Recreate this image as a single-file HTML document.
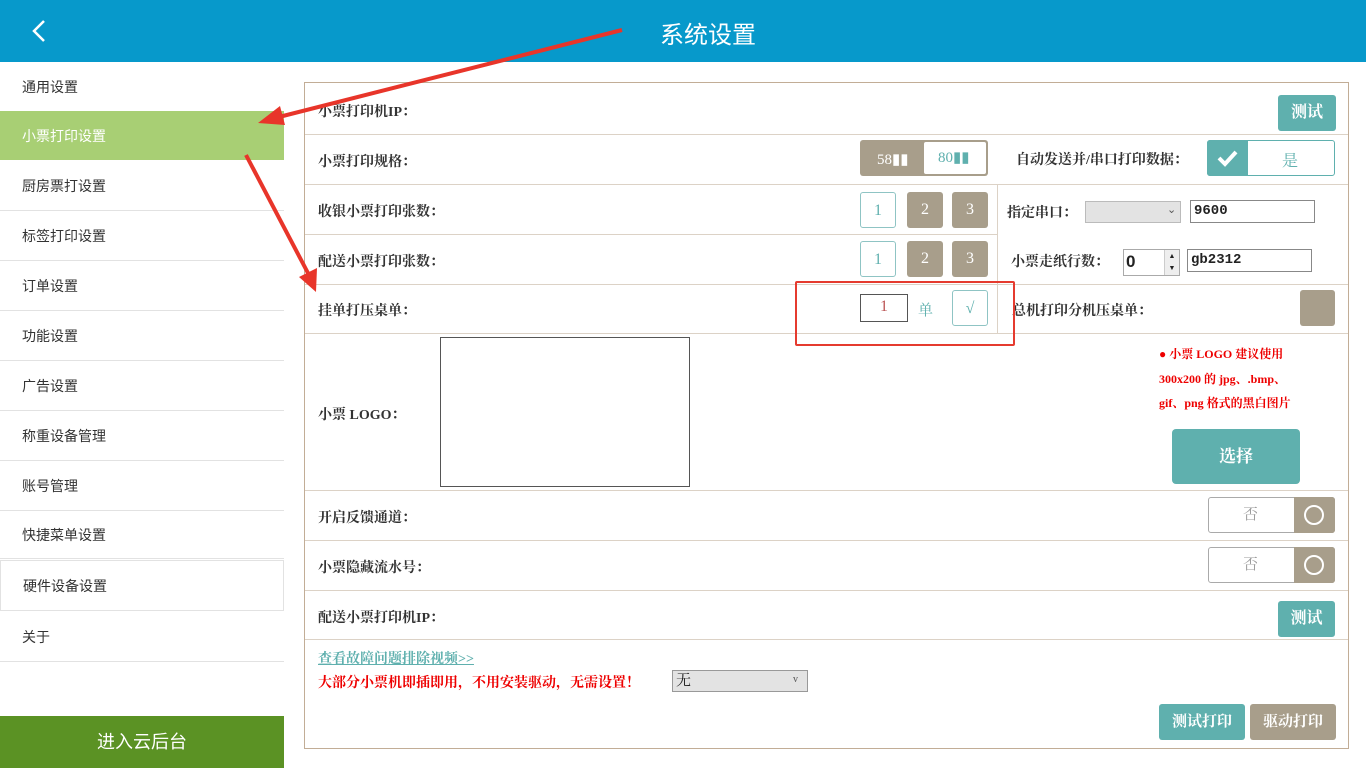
<!DOCTYPE html>
<html><head><meta charset="utf-8"><style>
*{margin:0;padding:0;box-sizing:border-box}
body{width:1366px;height:768px;position:relative;overflow:hidden;background:#fff;font-family:"Liberation Serif","Noto Serif CJK SC","Noto Sans CJK SC",serif;color:#222}
.a{position:absolute}
.hdr{left:0;top:0;width:1366px;height:62px;background:#0799cb}
.title{left:0;top:15px;width:1416px;text-align:center;color:#fff;font:24px "Liberation Sans","Noto Sans CJK SC",sans-serif}
.side{font:14px "Liberation Sans","Noto Sans CJK SC",sans-serif;color:#333}
.si{position:absolute;left:0;width:284px;height:50px;line-height:50px;padding-left:22px;border-bottom:1px solid #e2e2e2}
.panel{left:304px;top:82px;width:1045px;height:667px;border:1px solid #c2ad96}
.ln{position:absolute;left:305px;width:1043px;height:1px;background:#dcd2c6}
.lb{position:absolute;font-size:14px;font-weight:bold;color:#333}
.btn{position:absolute;border-radius:3px;color:#fff;text-align:center;font-weight:bold}
.teal{background:#5fb0ae}.tau{background:#a89e8b}
.nb{position:absolute;width:36px;height:36px;border-radius:3px;text-align:center;line-height:36px;font-size:16px}
.inp{position:absolute;border:1px solid #888;background:#fff;font:bold 14px "Liberation Mono",monospace;padding-left:3px}
</style></head><body>
<div class="a hdr"></div>
<div class="a title">系统设置</div>
<svg class="a" style="left:28px;top:18px" width="20" height="26"><path d="M16 3 L6 13 L16 23" stroke="#fff" stroke-width="2.5" fill="none"/></svg>

<div class="side">
<div class="si" style="top:62px">通用设置</div>
<div class="si" style="top:111px;background:#a8cf74;color:#fff;border:none;height:49px">小票打印设置</div>
<div class="si" style="top:161px">厨房票打设置</div>
<div class="si" style="top:211px">标签打印设置</div>
<div class="si" style="top:261px">订单设置</div>
<div class="si" style="top:311px">功能设置</div>
<div class="si" style="top:361px">广告设置</div>
<div class="si" style="top:411px">称重设备管理</div>
<div class="si" style="top:461px">账号管理</div>
<div class="si" style="top:510px;height:49px">快捷菜单设置</div>
<div class="si" style="top:560px;height:51px;border:1px solid #e2e2e2">硬件设备设置</div>
<div class="si" style="top:612px">关于</div>
</div>
<div class="a" style="left:0;top:716px;width:284px;height:52px;background:#5b9224;color:#fff;text-align:center;font-family:'Liberation Sans','Noto Sans CJK SC',sans-serif;font-size:18px;line-height:52px">进入云后台</div>

<div class="a panel"></div>
<div class="ln" style="top:134px"></div>
<div class="ln" style="top:184px"></div>
<div class="ln" style="top:234px;width:692px"></div>
<div class="ln" style="top:284px"></div>
<div class="ln" style="top:333px"></div>
<div class="ln" style="top:490px"></div>
<div class="ln" style="top:540px"></div>
<div class="ln" style="top:590px"></div>
<div class="ln" style="top:639px"></div>
<div class="a" style="left:997px;top:184px;width:1px;height:149px;background:#dcd2c6"></div>

<div class="lb" style="left:318px;top:101px">小票打印机IP：</div>
<div class="btn teal" style="left:1278px;top:95px;width:58px;height:36px;line-height:36px;font-size:16px">测试</div>

<div class="lb" style="left:318px;top:151px">小票打印规格：</div>
<div class="a tau" style="left:860px;top:140px;width:128px;height:36px;border-radius:3px"></div>
<div class="a" style="left:877px;top:150px;color:#fff;font-size:15px">58▮▮</div>
<div class="a" style="left:924px;top:142px;width:62px;height:32px;background:#fff;border-radius:2px;color:#5fb0ae;font-size:15px;line-height:32px;padding-left:14px">80▮▮</div>
<div class="lb" style="left:1016px;top:149px">自动发送并/串口打印数据：</div>
<div class="a" style="left:1207px;top:140px;width:128px;height:36px;border:1px solid #5fb0ae;border-radius:3px;background:#fff"></div>
<div class="a teal" style="left:1207px;top:140px;width:41px;height:36px;border-radius:3px 0 0 3px"></div>
<svg class="a" style="left:1215px;top:146px" width="26" height="24"><path d="M4 12 L10 18 L21 6" stroke="#fff" stroke-width="4" fill="none"/></svg>
<div class="a" style="left:1282px;top:148px;color:#5fb0ae;font-size:16px">是</div>

<div class="lb" style="left:318px;top:201px">收银小票打印张数：</div>
<div class="nb" style="left:860px;top:192px;border:1px solid #8fc4c4;color:#5fb0ae">1</div>
<div class="nb tau" style="left:907px;top:192px;color:#fff">2</div>
<div class="nb tau" style="left:952px;top:192px;color:#fff">3</div>
<div class="lb" style="left:1007px;top:202px">指定串口：</div>
<div class="a" style="left:1085px;top:201px;width:96px;height:22px;background:#e3e3e3;border:1px solid #bbb"></div>
<div class="a" style="left:1167px;top:203px;font-size:11px;color:#555">⌄</div>
<div class="inp" style="left:1190px;top:200px;width:125px;height:23px;line-height:20px">9600</div>

<div class="lb" style="left:318px;top:251px">配送小票打印张数：</div>
<div class="nb" style="left:860px;top:241px;border:1px solid #8fc4c4;color:#5fb0ae">1</div>
<div class="nb tau" style="left:907px;top:241px;color:#fff">2</div>
<div class="nb tau" style="left:952px;top:241px;color:#fff">3</div>
<div class="lb" style="left:1011px;top:251px">小票走纸行数：</div>
<div class="a" style="left:1123px;top:249px;width:57px;height:27px;border:1px solid #aaa;background:#fff;font:bold 17px 'Liberation Sans',sans-serif;padding-left:2px;line-height:24px">0</div>
<div class="a" style="left:1164px;top:250px;width:15px;height:25px;background:#eee;border-left:1px solid #ccc;font-size:7px;text-align:center;line-height:12px">▲<br>▼</div>
<div class="inp" style="left:1187px;top:249px;width:125px;height:23px;line-height:20px">gb2312</div>

<div class="lb" style="left:318px;top:300px">挂单打压桌单：</div>
<div class="a" style="left:860px;top:294px;width:48px;height:28px;border:1px solid #555;color:#b55;text-align:center;font-size:16px;line-height:24px">1</div>
<div class="a" style="left:918px;top:299px;color:#5fb0ae;font-size:15px">单</div>
<div class="nb" style="left:952px;top:290px;border:1px solid #8fc4c4;color:#5fb0ae">√</div>
<div class="lb" style="left:1012px;top:300px">总机打印分机压桌单：</div>
<div class="a tau" style="left:1300px;top:290px;width:35px;height:36px;border-radius:3px"></div>

<div class="lb" style="left:318px;top:404px">小票 LOGO：</div>
<div class="a" style="left:440px;top:337px;width:250px;height:150px;border:1px solid #555"></div>
<div class="a" style="left:1159px;top:342px;color:#e00;font-size:12px;font-weight:bold;line-height:24.5px">● 小票 LOGO 建议使用<br>300x200 的 jpg、.bmp、<br>gif、png 格式的黑白图片</div>
<div class="btn teal" style="left:1172px;top:429px;width:128px;height:55px;line-height:55px;font-size:17px;border-radius:4px">选择</div>

<div class="lb" style="left:318px;top:507px">开启反馈通道：</div>
<div class="a" style="left:1208px;top:497px;width:127px;height:36px;border:1px solid #aaa;border-radius:3px;background:#fff;color:#999;font-size:15px;line-height:34px;padding-left:34px">否</div>
<div class="a tau" style="left:1294px;top:497px;width:41px;height:36px;border-radius:0 3px 3px 0"></div>
<div class="a" style="left:1304px;top:505px;width:20px;height:20px;border:2px solid #fff;border-radius:50%"></div>

<div class="lb" style="left:318px;top:557px">小票隐藏流水号：</div>
<div class="a" style="left:1208px;top:547px;width:127px;height:36px;border:1px solid #aaa;border-radius:3px;background:#fff;color:#999;font-size:15px;line-height:34px;padding-left:34px">否</div>
<div class="a tau" style="left:1294px;top:547px;width:41px;height:36px;border-radius:0 3px 3px 0"></div>
<div class="a" style="left:1304px;top:555px;width:20px;height:20px;border:2px solid #fff;border-radius:50%"></div>

<div class="lb" style="left:318px;top:607px">配送小票打印机IP：</div>
<div class="btn teal" style="left:1278px;top:601px;width:57px;height:36px;line-height:36px;font-size:16px">测试</div>

<div class="lb" style="left:318px;top:648px;color:#5fb0ae;text-decoration:underline">查看故障问题排除视频>></div>
<div class="lb" style="left:318px;top:672px;color:#e00">大部分小票机即插即用，不用安装驱动，无需设置！</div>
<div class="a" style="left:672px;top:670px;width:136px;height:22px;background:#e3e3e3;border:1px solid #999;font-size:15px;padding-left:3px;line-height:20px">无</div>
<div class="a" style="left:793px;top:674px;font-size:10px;color:#555">v</div>
<div class="btn teal" style="left:1159px;top:704px;width:86px;height:36px;line-height:36px;font-size:15px">测试打印</div>
<div class="btn tau" style="left:1250px;top:704px;width:86px;height:36px;line-height:36px;font-size:15px">驱动打印</div>

<div class="a" style="left:795px;top:281px;width:220px;height:65px;border:2px solid #e53b2f;border-radius:2px"></div>
<svg class="a" style="left:0;top:0" width="1366" height="768">
<path d="M622 30 L275 118" stroke="#e8352a" stroke-width="4" fill="none"/>
<path d="M258 123 L280 106 L285 125 Z" fill="#e8352a"/>
<path d="M246 155 L309 275" stroke="#e8352a" stroke-width="4" fill="none"/>
<path d="M316 292 L299 277 L317 268 Z" fill="#e8352a"/>
</svg>
</body></html>
